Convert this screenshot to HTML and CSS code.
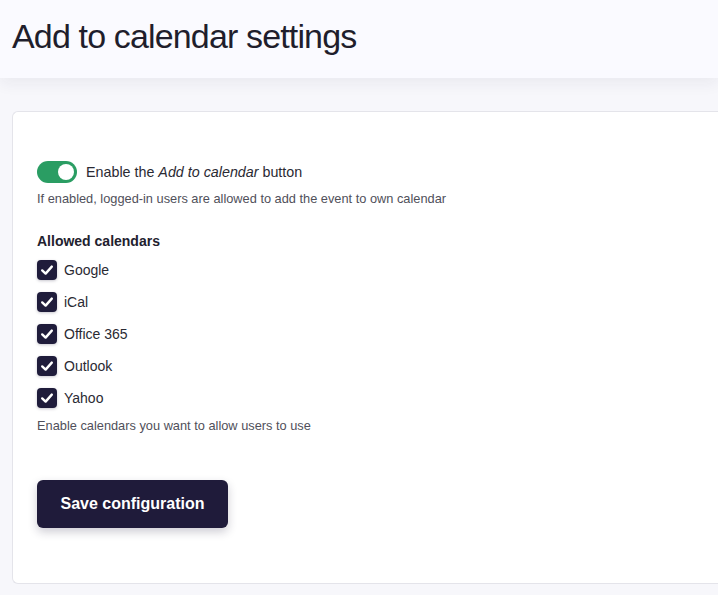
FILE: index.html
```html
<!DOCTYPE html>
<html>
<head>
<meta charset="utf-8">
<link rel="stylesheet" href="styles.css">
</head>
<body>
<header class="top">
  <h1 class="title">Add to calendar settings</h1>
</header>
<main class="page">
  <section class="card">
    <div class="toggle-row">
      <span class="toggle"><span class="knob"></span></span>
      <span class="toggle-label">Enable the <em>Add to calendar</em> button</span>
    </div>
    <p class="help">If enabled, logged-in users are allowed to add the event to own calendar</p>
    <h2 class="group-title">Allowed calendars</h2>
    <ul class="checks">
      <li class="check"><span class="box"><svg viewBox="0 0 20 20" width="20" height="20"><path d="M5.2 10.4 L8.6 13.6 L14.8 6.6" fill="none" stroke="#fff" stroke-width="2.4" stroke-linecap="round" stroke-linejoin="round"/></svg></span>Google</li>
      <li class="check"><span class="box"><svg viewBox="0 0 20 20" width="20" height="20"><path d="M5.2 10.4 L8.6 13.6 L14.8 6.6" fill="none" stroke="#fff" stroke-width="2.4" stroke-linecap="round" stroke-linejoin="round"/></svg></span>iCal</li>
      <li class="check"><span class="box"><svg viewBox="0 0 20 20" width="20" height="20"><path d="M5.2 10.4 L8.6 13.6 L14.8 6.6" fill="none" stroke="#fff" stroke-width="2.4" stroke-linecap="round" stroke-linejoin="round"/></svg></span>Office 365</li>
      <li class="check"><span class="box"><svg viewBox="0 0 20 20" width="20" height="20"><path d="M5.2 10.4 L8.6 13.6 L14.8 6.6" fill="none" stroke="#fff" stroke-width="2.4" stroke-linecap="round" stroke-linejoin="round"/></svg></span>Outlook</li>
      <li class="check"><span class="box"><svg viewBox="0 0 20 20" width="20" height="20"><path d="M5.2 10.4 L8.6 13.6 L14.8 6.6" fill="none" stroke="#fff" stroke-width="2.4" stroke-linecap="round" stroke-linejoin="round"/></svg></span>Yahoo</li>
    </ul>
    <p class="help">Enable calendars you want to allow users to use</p>
    <button class="save">Save configuration</button>
  </section>
</main>
</body>
</html>
```
FILE: styles.css
```css
* { box-sizing: border-box; }
html, body { margin: 0; padding: 0; }
body {
  font-family: "Liberation Sans", Arial, sans-serif;
  color: #22212e;
  background: #f7f7fb;
  width: 718px;
  height: 595px;
  overflow: hidden;
}
.top {
  background: #fafaff;
  height: 78px;
  padding: 16px 12px 0;
  box-shadow: 0 6px 14px rgba(30, 30, 60, 0.06);
  position: relative;
}
.title {
  margin: 0;
  font-size: 34px;
  font-weight: 400;
  letter-spacing: -0.85px;
  line-height: 40px;
  color: #1f1e2c;
}
.page {
  padding: 33px 0 0 12px;
}
.card {
  background: #fff;
  border: 1px solid #e4e4ea;
  border-right: none;
  border-radius: 6px 0 0 6px;
  height: 473px;
  padding: 49px 24px 0;
}
.toggle-row {
  display: flex;
  align-items: center;
  gap: 9px;
  height: 22px;
}
.toggle {
  width: 40px;
  height: 22px;
  border-radius: 11px;
  background: #2a9d63;
  position: relative;
  display: inline-block;
}
.knob {
  position: absolute;
  right: 3px;
  top: 3px;
  width: 16px;
  height: 16px;
  border-radius: 50%;
  background: #fff;
}
.toggle-label {
  font-size: 14.3px;
  color: #2a2a33;
}
.help {
  margin: 8px 0 0;
  font-size: 12.8px;
  color: #50505a;
  line-height: 16px;
}
.group-title {
  margin: 25px 0 0;
  font-size: 14px;
  font-weight: 700;
  color: #22212e;
  line-height: 18px;
}
.checks {
  list-style: none;
  margin: 4px 0 0;
  padding: 0;
}
.check {
  display: flex;
  align-items: center;
  gap: 7px;
  height: 32px;
  font-size: 14px;
  color: #2a2a33;
}
.box {
  width: 20px;
  height: 20px;
  border-radius: 4px;
  background: #1f1c3b;
  display: inline-flex;
  box-shadow: 0 1px 3px rgba(30, 28, 60, 0.25);
}
.checks + .help { margin-top: 4px; }
.save {
  display: block;
  margin-top: 46px;
  width: 191px;
  height: 48px;
  border: none;
  border-radius: 6px;
  background: #1f1b3a;
  color: #fff;
  font-family: "Liberation Sans", Arial, sans-serif;
  font-size: 16px;
  font-weight: 700;
  box-shadow: 0 4px 10px rgba(30, 28, 60, 0.22);
}
```
